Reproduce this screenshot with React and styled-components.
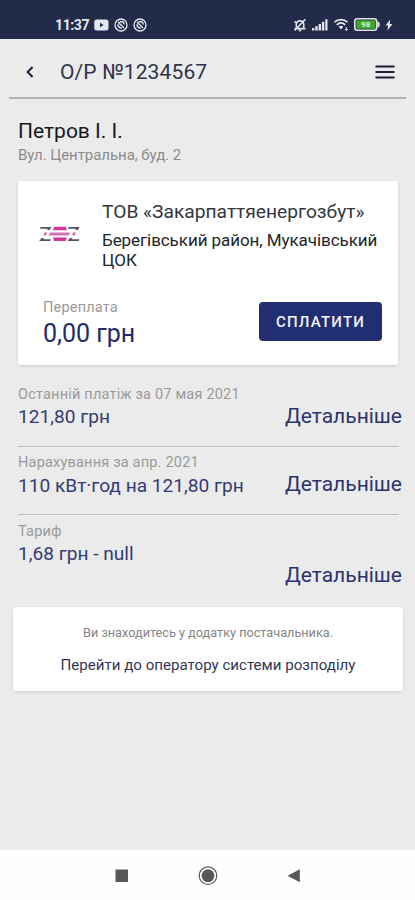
import React from "react";
import styled, { createGlobalStyle } from "styled-components";

const GlobalStyle = createGlobalStyle`
  * {
    box-sizing: border-box;
  }

  body {
    margin: 0;
    background-color: #ebebeb;
    font-family: Roboto, "Noto Sans", sans-serif;
  }

  h1, h2, p {
    margin: 0;
    font-weight: 400;
  }

  button {
    font-family: inherit;
    border: none;
    background: none;
    padding: 0;
  }

  svg {
    display: block;
    flex: none;
  }
`;

const Screen = styled.div`
  display: flex;
  flex-direction: column;
  width: 100%;
  height: 900px;
  overflow: hidden;
  background-color: #ebebeb;
`;

const StatusBar = styled.div`
  display: flex;
  align-items: center;
  justify-content: space-between;
  height: 39px;
  padding: 10px 22px 0 55px;
  background-color: #232b4b;
  color: #e6e8f0;
`;

const StatusGroup = styled.div`
  display: flex;
  align-items: center;
  gap: ${(props) => props.$gap};
`;

const Clock = styled.span`
  font-size: 14px;
  font-weight: 700;
  line-height: 16px;
  letter-spacing: -0.4px;
`;

const Header = styled.header`
  display: flex;
  align-items: center;
  height: 60px;
  margin: 0 9px;
  padding: 7px 11px 0 14px;
  border-bottom: 2px solid #b2b2b2;
`;

const IconButton = styled.button`
  display: flex;
  color: #1b2038;
`;

const Title = styled.h1`
  flex: 1;
  margin-left: 23px;
  font-size: 21px;
  line-height: 26px;
  letter-spacing: 0.12px;
  color: #30334a;
`;

const Customer = styled.section`
  padding: 19px 18px 0;
`;

const Name = styled.h2`
  font-size: 21px;
  line-height: 26px;
  color: #17181d;
`;

const Address = styled.p`
  margin-top: 1px;
  font-size: 15px;
  line-height: 20px;
  letter-spacing: -0.05px;
  color: #8c8c8c;
`;

const Card = styled.section`
  height: 184px;
  margin: 16px 17px 0 18px;
  background-color: #fff;
  border-radius: 2px;
  box-shadow: 0 1px 3px rgba(0, 0, 0, 0.14);
`;

const Supplier = styled.div`
  display: flex;
  padding: 18px 16px 0 20px;

  svg {
    margin: 27px 22px 0 1px;
  }
`;

const SupplierName = styled.h2`
  font-size: 19.2px;
  line-height: 26px;
  color: #34363f;
`;

const District = styled.p`
  margin-top: 5px;
  font-size: 17px;
  line-height: 20px;
  letter-spacing: -0.07px;
  color: #222429;
`;

const Balance = styled.div`
  display: flex;
  align-items: flex-start;
  justify-content: space-between;
  padding: 28px 16px 0 25px;
`;

const Label = styled.p`
  padding-top: ${(props) => props.$top || "0"};
  font-size: 14.5px;
  line-height: 18px;
  letter-spacing: 0.2px;
  color: #9a9a9a;
`;

const Amount = styled.p`
  margin-top: 1px;
  font-size: 25px;
  line-height: 32px;
  color: #232a68;
`;

const PayButton = styled.button`
  width: 123px;
  height: 39px;
  margin-top: 4px;
  border-radius: 4px;
  background-color: #222e72;
  color: #f4f5fa;
  font-size: 15px;
  font-weight: 500;
  letter-spacing: 1.2px;
`;

const Records = styled.section`
  margin: 20px 16px 0 18px;
`;

const Record = styled.div`
  display: flex;
  align-items: flex-start;
  justify-content: space-between;
  height: ${(props) => props.$height};
  padding-top: ${(props) => props.$top || "0"};
  margin-right: -3px;
`;

const Divider = styled.hr`
  height: 1px;
  margin: 0;
  border: none;
  background-color: #bfbfbf;
`;

const Value = styled.p`
  margin-top: ${(props) => props.$gap || "1px"};
  font-size: 19.1px;
  line-height: 26px;
  color: #343b72;
`;

const Details = styled.button`
  margin-top: ${(props) => props.$offset};
  font-size: 21px;
  line-height: 26px;
  color: #2b336f;
`;

const Notice = styled.section`
  height: 84px;
  margin: 0 12px 0 13px;
  padding-top: 17px;
  background-color: #fff;
  border-radius: 2px;
  box-shadow: 0 1px 3px rgba(0, 0, 0, 0.12);
  text-align: center;
`;

const NoticeText = styled.p`
  font-size: 12.7px;
  line-height: 18px;
  color: #858585;
`;

const NoticeLink = styled.p`
  margin-top: 13px;
  font-size: 15.1px;
  line-height: 20px;
  color: #343854;
`;

const NavBar = styled.nav`
  display: flex;
  justify-content: space-between;
  height: 50px;
  margin-top: auto;
  padding: 16px 115px 0 115px;
  background-color: #fefefe;
  color: #575757;
`;

function VideoIcon() {
  return (
    <svg width="15" height="12" viewBox="0 0 15 12">
      <rect x="0.3" y="0.5" width="14.2" height="11" rx="2.5" fill="currentColor" />
      <path d="M6 3.8v4.4L9.6 6z" fill="#232b4b" />
    </svg>
  );
}

function CallIcon() {
  return (
    <svg width="14" height="14" viewBox="0 0 14 14" fill="none" stroke="currentColor">
      <circle cx="7" cy="7" r="6" strokeWidth="1.3" />
      <path d="M4 4l6 6M5.6 3.8h3.2c.9.6 1.4 1.5 1.4 2.7M4 6.3c0 2.3 1.4 3.8 3.8 3.9" strokeWidth="1.4" />
    </svg>
  );
}

function MutedIcon() {
  return (
    <svg width="14" height="14" viewBox="0 0 14 14" fill="none" stroke="currentColor" strokeWidth="1.5">
      <path d="M3.3 10.5V6a3.8 3.8 0 0 1 7.5 0v4.5zM1.5 10.7h11M5.8 12.6h2.4M12.4 1.2 1.6 12.6M1.6 3.4l1.4 1.3" />
    </svg>
  );
}

function SignalIcon() {
  return (
    <svg width="16" height="12" viewBox="0 0 16 12" fill="currentColor">
      <rect x="0" y="9" width="2.4" height="2.5" />
      <rect x="3.3" y="7.2" width="2.4" height="4.3" />
      <rect x="6.6" y="5" width="2.4" height="6.5" />
      <rect x="9.9" y="2.8" width="2.4" height="8.7" />
      <rect x="13.3" y="0.3" width="2.2" height="11.2" />
    </svg>
  );
}

function WifiIcon() {
  return (
    <svg width="16" height="13" viewBox="0 0 16 13" fill="none" stroke="currentColor">
      <path d="M1.5 4.2C5.3.7 10.7.7 14.5 4.2M3.8 6.8c2.6-2.3 5.8-2.3 8.4 0" strokeWidth="1.7" />
      <path d="M5.7 8.7c1.5-1.2 3.1-1.2 4.6 0L8 11.6z" fill="currentColor" stroke="none" />
      <path d="M13.3 9v3.4M11.8 11l1.5 1.5 1.5-1.5" strokeWidth="1" />
    </svg>
  );
}

function BatteryIcon() {
  return (
    <svg width="26" height="13" viewBox="0 0 26 13">
      <rect x="0.8" y="0.8" width="21.8" height="11.4" rx="2.5" fill="#232b4b" stroke="#dfe3e4" strokeWidth="1.6" />
      <path d="M23.4 3.3c2 .6 2.3 1.8 2.3 3.2s-.3 2.6-2.3 3.2z" fill="#dfe3e4" />
      <rect x="2.3" y="2.3" width="18.8" height="8.4" rx="1" fill="#3fa52f" />
      <text x="11.7" y="9.4" textAnchor="middle" fontSize="8" fontWeight="700" fill="#d9f5cf">98</text>
    </svg>
  );
}

function BoltIcon() {
  return (
    <svg width="8" height="12" viewBox="0 0 8 12" fill="currentColor">
      <path d="M5.2.4.5 6.6h2.7l-.8 5L7.5 5H4.7z" />
    </svg>
  );
}

function SupplierLogo() {
  return (
    <svg width="41" height="16" viewBox="0 0 41 16">
      <g fill="#55555c">
        <path d="M1.8 1h10.7l-2 2.9H8l.8-1.1H.6z" />
        <path d="M30 1h10.7l-2 2.9h-2.5l.8-1.1h-8.2z" />
        <path d="M2.6 11.9H5l-.6 1.3H12l-.7 1.8H.2z" />
        <path d="M31 11.9h2.4l-.6 1.3h7.6l-.7 1.8H28.6z" />
      </g>
      <g fill="#d4359a">
        <path d="M15 .8h11.8l1 3.4H14z" />
        <path d="M14 11.6h13.8l-1 3.4H15z" />
      </g>
      <path d="M11 6.5h20.3l-1.6 2.9H9.4z" fill="#d173b8" />
      <path d="M5.5 6.5H8L6.7 9.4H4.6zM34.2 6.5h2.5l-1.3 2.9h-2.2z" fill="#cf5896" />
    </svg>
  );
}

export default function App() {
  return (
    <>
      <GlobalStyle />
      <Screen>
        <StatusBar>
          <StatusGroup $gap="5px">
            <Clock>11:37</Clock>
            <VideoIcon />
            <CallIcon />
            <CallIcon />
          </StatusGroup>
          <StatusGroup $gap="5px">
            <MutedIcon />
            <SignalIcon />
            <WifiIcon />
            <BatteryIcon />
            <BoltIcon />
          </StatusGroup>
        </StatusBar>

        <Header>
          <IconButton aria-label="Назад">
            <svg width="14" height="14" viewBox="0 0 14 14" fill="none" stroke="currentColor" strokeWidth="2">
              <path d="M9.6 2l-5 5 5 5" />
            </svg>
          </IconButton>
          <Title>О/Р №1234567</Title>
          <IconButton aria-label="Меню">
            <svg width="20" height="14" viewBox="0 0 20 14" fill="currentColor">
              <path d="M.5.5h19v2H.5zM.5 6h19v2H.5zM.5 11.5h19v2H.5z" />
            </svg>
          </IconButton>
        </Header>

        <Customer>
          <Name>Петров І. І.</Name>
          <Address>Вул. Центральна, буд. 2</Address>
        </Customer>

        <Card>
          <Supplier>
            <SupplierLogo />
            <div>
              <SupplierName>ТОВ «Закарпаттяенергозбут»</SupplierName>
              <District>
                Берегівський район, Мукачівський
                <br />
                ЦОК
              </District>
            </div>
          </Supplier>
          <Balance>
            <div>
              <Label $top="1px">Переплата</Label>
              <Amount>0,00 грн</Amount>
            </div>
            <PayButton>СПЛАТИТИ</PayButton>
          </Balance>
        </Card>

        <Records>
          <Record $height="61px">
            <div>
              <Label $top="1px">Останній платіж за 07 мая 2021</Label>
              <Value $gap="0">121,80 грн</Value>
            </div>
            <Details $offset="18px">Детальніше</Details>
          </Record>
          <Divider />
          <Record $height="67px" $top="7px">
            <div>
              <Label>Нарахування за апр. 2021</Label>
              <Value>110 кВт·год на 121,80 грн</Value>
            </div>
            <Details $offset="17px">Детальніше</Details>
          </Record>
          <Divider />
          <Record $height="92px" $top="7px">
            <div>
              <Label $top="1px">Тариф</Label>
              <Value $gap="0">1,68 грн - null</Value>
            </div>
            <Details $offset="40px">Детальніше</Details>
          </Record>
        </Records>

        <Notice>
          <NoticeText>Ви знаходитесь у додатку постачальника.</NoticeText>
          <NoticeLink>Перейти до оператору системи розподілу</NoticeLink>
        </Notice>

        <NavBar>
          <svg width="13" height="20" viewBox="0 0 13 20" fill="currentColor">
            <rect x="0.5" y="3.5" width="12.5" height="12.5" />
          </svg>
          <svg width="20" height="20" viewBox="0 0 20 20" fill="currentColor">
            <circle cx="10" cy="9.7" r="8.8" fill="none" stroke="currentColor" strokeWidth="1.2" />
            <circle cx="10" cy="9.7" r="6.4" />
          </svg>
          <svg width="13" height="20" viewBox="0 0 13 20" fill="currentColor">
            <path d="M12.8 3.2v13L.6 9.7z" />
          </svg>
        </NavBar>
      </Screen>
    </>
  );
}
